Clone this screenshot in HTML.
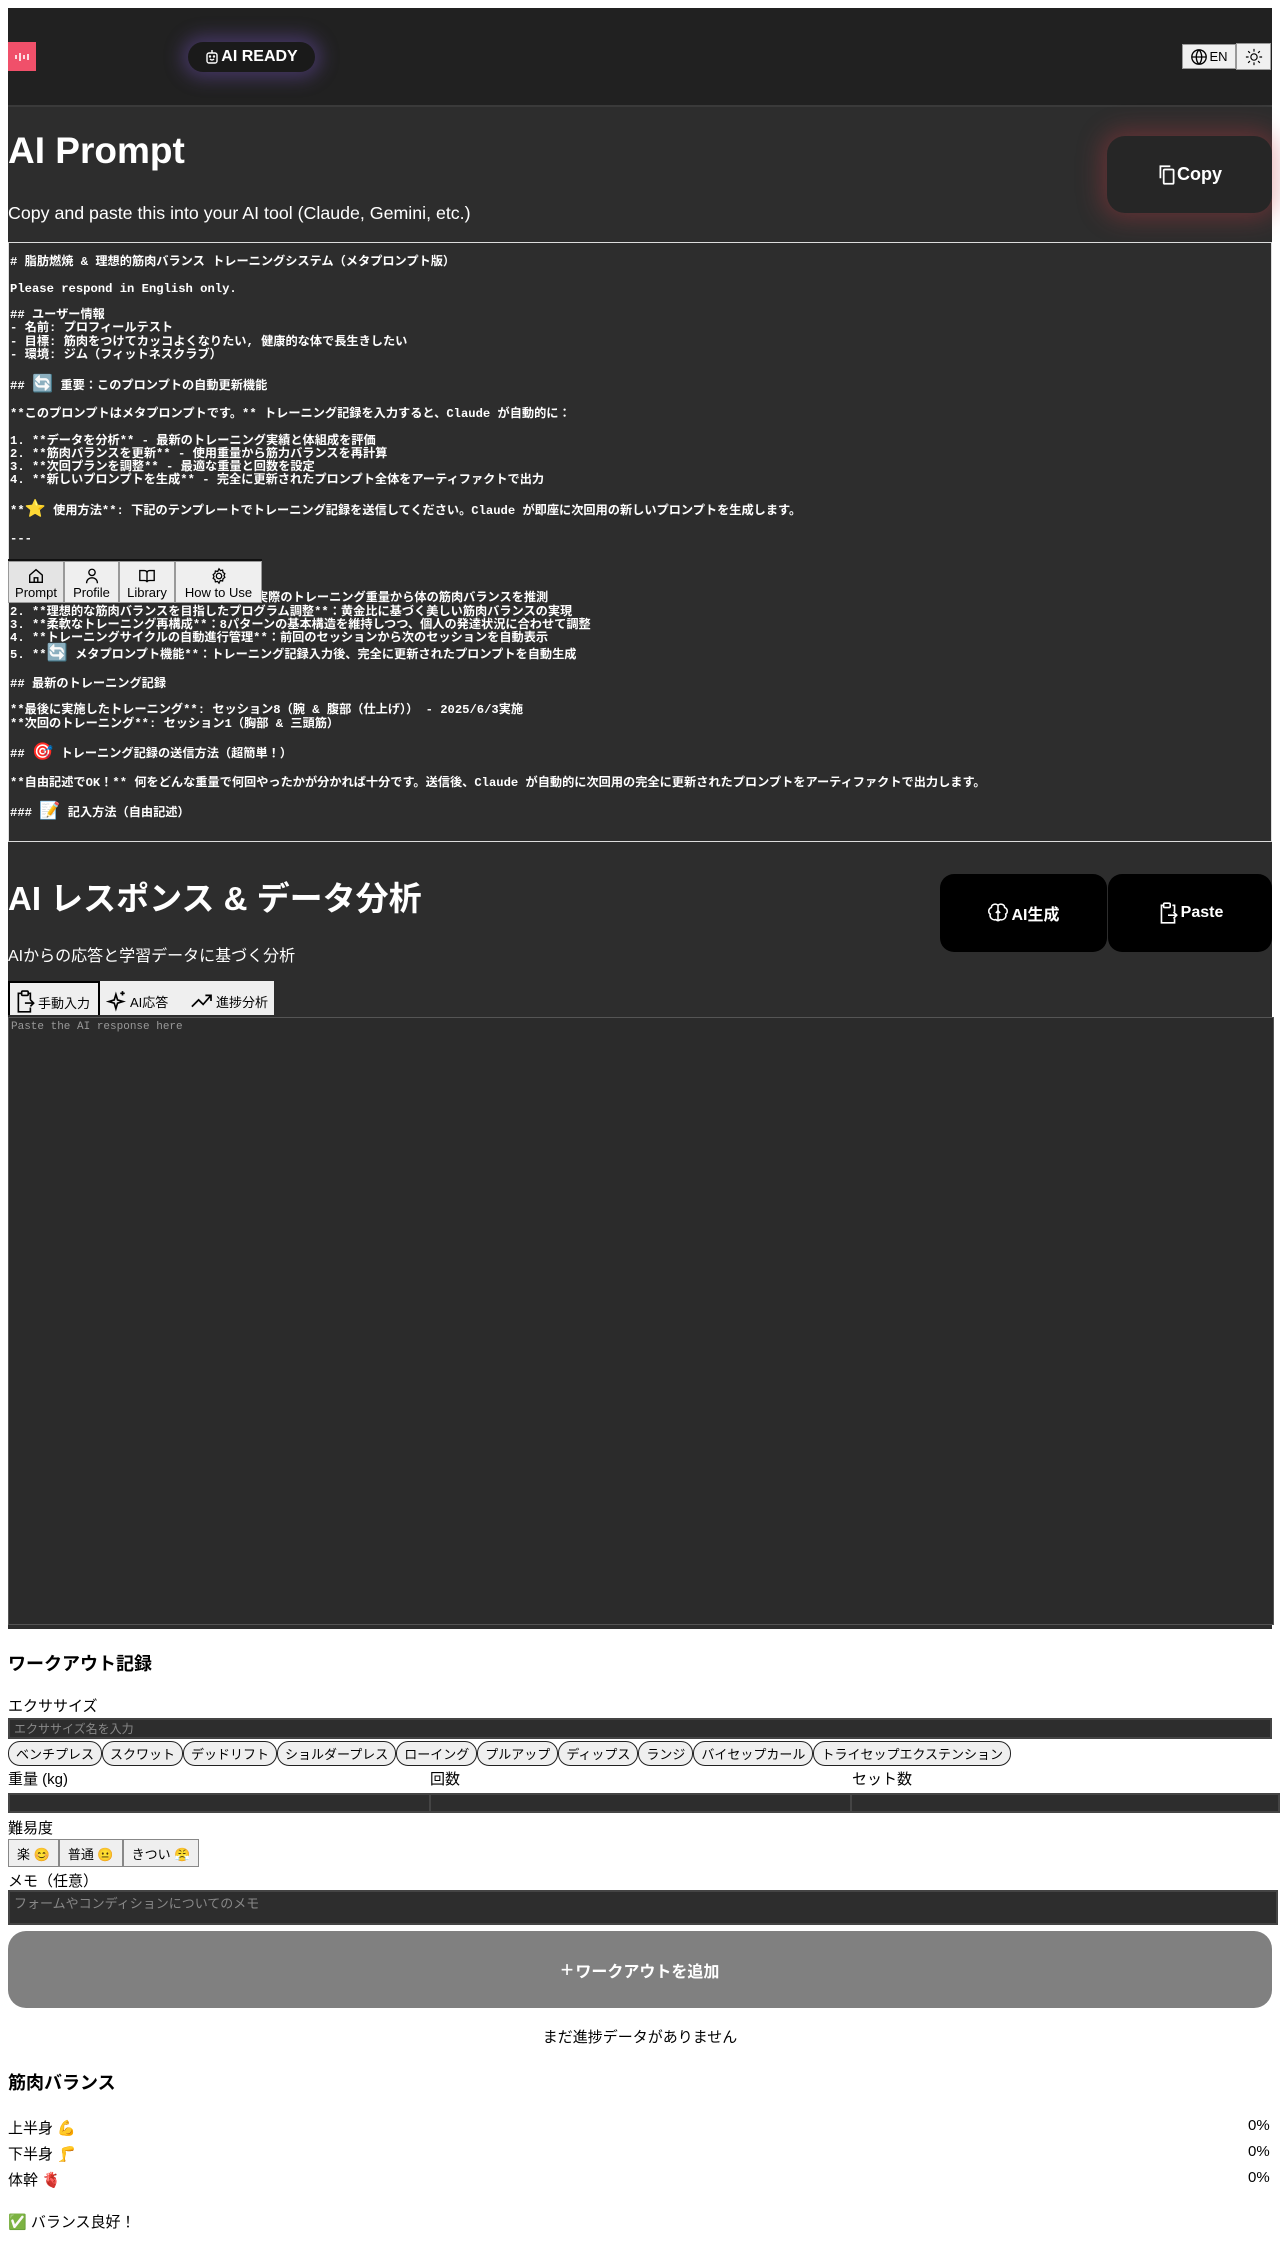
<!DOCTYPE html>
<html><head><meta charset="utf-8">
<style>
*{box-sizing:border-box}
body{margin:0;background:#fff;font-family:"Liberation Sans","Noto Sans CJK JP",sans-serif;width:1280px;height:2259px;position:relative;overflow:hidden;color:#000}
.hdr{position:absolute;left:8px;top:8px;width:1264px;height:99px;background:#212121;border-bottom:2px solid #3a3a3a}
.logo{position:absolute;left:0;top:34px;width:28px;height:29px;background:#f0506a;display:flex;align-items:center;justify-content:center}
.ready{position:absolute;left:180px;top:34px;width:127px;height:30px;border-radius:15px;background:#1a1a1a;color:#fff;font-weight:bold;font-size:16px;display:flex;align-items:center;justify-content:center;gap:2px;box-shadow:0 0 18px 6px rgba(110,80,180,.45)}
.en{position:absolute;left:1174px;top:36px;width:54px;height:25px;background:#f0f0f0;border:1px solid #999;display:flex;align-items:center;justify-content:center;font-size:13px;gap:1px}
.sun{position:absolute;left:1228px;top:35px;width:35px;height:27px;background:#f0f0f0;border:1px solid #999;display:flex;align-items:center;justify-content:center}
.sec1{position:absolute;left:8px;top:107px;width:1264px;height:738px;background:#2d2d2d}
h1{margin:0;position:absolute;left:0;font-size:37px;color:#fff;font-weight:bold}
.sub{position:absolute;left:0;color:#fff;font-size:17.8px}
.copy{position:absolute;left:1099px;top:29px;width:165px;height:77px;border-radius:18px;background:#262626;color:#fff;font-weight:bold;font-size:18px;display:flex;align-items:center;justify-content:center;box-shadow:0 0 24px 6px rgba(200,60,70,.35)}
.ta{position:absolute;left:0;top:135px;width:1264px;height:600px;border:1px solid #ddd;background:#2d2d2d;color:#fff;font-family:"Liberation Mono","Noto Sans CJK JP",monospace;font-size:12.2px;font-weight:bold;line-height:13.3px;padding:13px 1px 0;white-space:pre;overflow:hidden;margin:0}
.ta .e{font-size:17px;line-height:19px}
.nav{position:absolute;left:8px;top:559px;width:254px;height:44px;display:flex;border-top:2px solid #111;z-index:5}
.nav div{background:#efefef;border:1px solid #999;display:flex;flex-direction:column;align-items:center;justify-content:flex-end;font-size:13px;padding-bottom:2px;color:#000}
.sec2{position:absolute;left:8px;top:845px;width:1264px;height:784px;background:#2d2d2d}
.bb{position:absolute;top:29px;height:78px;border-radius:14px;background:#000;color:#fff;font-weight:bold;font-size:16px;display:flex;align-items:center;justify-content:center;gap:2px}
.tabs{position:absolute;left:0;top:136px;display:flex;height:34px}
.tabs div{background:#efefef;display:flex;align-items:center;font-size:13px;padding:6px 6px 0 6px;gap:2px}
.ta2{position:absolute;left:0;top:172px;width:1266px;height:608px;background:#2b2b2b;border:1px solid #555;color:#999;font-family:"Liberation Mono",monospace;font-size:11px;padding:3px 2px}
.lbl{position:absolute;left:8px;font-size:15px}
.h3{position:absolute;left:8px;font-size:18px;font-weight:bold}
.inp{position:absolute;background:#2d2d2d;border:2px solid #444;color:#888;font-size:13px;padding:1px 4px}
.chips{position:absolute;left:8px;top:1741px;display:flex}
.chips span{border:1.5px solid #222;border-radius:12px;background:#efefef;font-size:13px;padding:2px 7px;height:25px;display:flex;align-items:center}
.diff{position:absolute;left:8px;top:1839px;display:flex}
.diff span{border:1px solid #888;background:#efefef;font-size:13px;padding:0 8px;height:28px;display:flex;align-items:center}
.add{position:absolute;left:8px;top:1931px;width:1264px;height:77px;border-radius:18px;background:#808080;color:#fff;font-weight:bold;font-size:16px;display:flex;align-items:center;justify-content:center}
</style></head><body>
<div class="hdr">
 <div class="logo"><svg width="16" height="12" viewBox="0 0 16 12" stroke="#fff" stroke-width="1.6"><path d="M2 4v4M6 2v8M10 4v4M14 3v6"/></svg></div>
 <div class="ready"><svg width="14" height="16" viewBox="0 0 14 16" fill="none" stroke="#fff" stroke-width="1.4"><rect x="2" y="4" width="10" height="10" rx="2"/><path d="M7 4V1M5 10q2 2 4 0"/><circle cx="5" cy="7.5" r=".5"/><circle cx="9" cy="7.5" r=".5"/></svg>AI READY</div>
 <div class="en"><svg width="18" height="18" viewBox="0 0 20 20" fill="none" stroke="#000" stroke-width="1.5"><circle cx="10" cy="10" r="8"/><path d="M2 10h16M10 2c-4 4-4 12 0 16M10 2c4 4 4 12 0 16"/></svg>EN</div>
 <div class="sun"><svg width="18" height="18" viewBox="0 0 20 20" fill="none" stroke="#000" stroke-width="1.3"><circle cx="10" cy="10" r="3.5"/><path d="M10 1v3M10 16v3M1 10h3M16 10h3M3.5 3.5l2 2M14.5 14.5l2 2M3.5 16.5l2-2M14.5 5.5l2-2"/></svg></div>
</div>
<div class="sec1">
 <h1 style="top:23px">AI Prompt</h1>
 <div class="sub" style="top:96px">Copy and paste this into your AI tool (Claude, Gemini, etc.)</div>
 <div class="copy"><svg width="20" height="22" viewBox="0 0 18 20" fill="none" stroke="#fff" stroke-width="1.6"><path d="M3 13V2h9"/><rect x="6" y="5" width="9" height="13" rx="1"/></svg>Copy</div>
<pre class="ta"># 脂肪燃焼 &amp; 理想的筋肉バランス トレーニングシステム（メタプロンプト版）

Please respond in English only.

## ユーザー情報
- 名前: プロフィールテスト
- 目標: 筋肉をつけてカッコよくなりたい, 健康的な体で長生きしたい
- 環境: ジム（フィットネスクラブ）

## <span class="e">🔄</span> 重要：このプロンプトの自動更新機能

**このプロンプトはメタプロンプトです。** トレーニング記録を入力すると、Claude が自動的に：

1. **データを分析** - 最新のトレーニング実績と体組成を評価
2. **筋肉バランスを更新** - 使用重量から筋力バランスを再計算
3. **次回プランを調整** - 最適な重量と回数を設定
4. **新しいプロンプトを生成** - 完全に更新されたプロンプト全体をアーティファクトで出力

**<span class="e">⭐</span> 使用方法**: 下記のテンプレートでトレーニング記録を送信してください。Claude が即座に次回用の新しいプロンプトを生成します。

---


## <span class="e">🎯</span> このシステムの特徴:
1. **使用重量から筋肉バランスを分析**：実際のトレーニング重量から体の筋肉バランスを推測
2. **理想的な筋肉バランスを目指したプログラム調整**：黄金比に基づく美しい筋肉バランスの実現
3. **柔軟なトレーニング再構成**：8パターンの基本構造を維持しつつ、個人の発達状況に合わせて調整
4. **トレーニングサイクルの自動進行管理**：前回のセッションから次のセッションを自動表示
5. **<span class="e">🔄</span> メタプロンプト機能**：トレーニング記録入力後、完全に更新されたプロンプトを自動生成

## 最新のトレーニング記録

**最後に実施したトレーニング**: セッション8（腕 &amp; 腹部（仕上げ）） - 2025/6/3実施
**次回のトレーニング**: セッション1（胸部 &amp; 三頭筋）

## <span class="e">🎯</span> トレーニング記録の送信方法（超簡単！）

**自由記述でOK！** 何をどんな重量で何回やったかが分かれば十分です。送信後、Claude が自動的に次回用の完全に更新されたプロンプトをアーティファクトで出力します。

### <span class="e">📝</span> 記入方法（自由記述）</pre>
</div>
<div class="nav">
 <div style="width:56px;background:#e4e4e4"><svg width="18" height="18" viewBox="0 0 20 20" fill="none" stroke="#000" stroke-width="1.5"><path d="M3 9l7-6 7 6v8H3z"/><path d="M8 17v-5h4v5"/></svg>Prompt</div>
 <div style="width:55px"><svg width="18" height="18" viewBox="0 0 20 20" fill="none" stroke="#000" stroke-width="1.5"><circle cx="10" cy="6" r="3.5"/><path d="M4 18c0-4 3-6 6-6s6 2 6 6"/></svg>Profile</div>
 <div style="width:56px"><svg width="18" height="18" viewBox="0 0 20 20" fill="none" stroke="#000" stroke-width="1.5"><path d="M2 4h5c2 0 3 1 3 3v10c0-1-1-2-3-2H2zM18 4h-5c-2 0-3 1-3 3v10c0-1 1-2 3-2h5z"/></svg>Library</div>
 <div style="width:87px"><svg width="18" height="18" viewBox="0 0 20 20" fill="none" stroke="#000" stroke-width="1.4"><circle cx="10" cy="10" r="3"/><path d="M10 2l1.5 2 2.5-.5.5 2.5 2 1.5-1 2 1 2-2 1.5-.5 2.5-2.5-.5L10 18l-1.5-2-2.5.5-.5-2.5-2-1.5 1-2-1-2 2-1.5.5-2.5 2.5.5z"/></svg>How to Use</div>
</div>
<div class="sec2">
 <h1 style="top:27px;font-size:33px">AI レスポンス &amp; データ分析</h1>
 <div class="sub" style="top:97px;font-size:16px">AIからの応答と学習データに基づく分析</div>
 <div class="bb" style="left:932px;width:167px"><svg width="22" height="22" viewBox="0 0 20 20" fill="none" stroke="#fff" stroke-width="1.4"><path d="M10 3c-2-2-6-1-6 2-3 1-3 5-1 6-1 3 2 6 5 5 1 1 2 1 2 1V3zM10 3c2-2 6-1 6 2 3 1 3 5 1 6 1 3-2 6-5 5-1 1-2 1-2 1"/><path d="M10 8l-2 2M10 8l2 2"/></svg>AI生成</div>
 <div class="bb" style="left:1100px;width:164px"><svg width="22" height="24" viewBox="0 0 20 22" fill="none" stroke="#fff" stroke-width="1.5"><rect x="6" y="2" width="6" height="4" rx="1"/><path d="M6 4H4v16h12v-4M14 4h2v6M10 13h8M15 10l3 3-3 3"/></svg>Paste</div>
 <div class="tabs">
  <div style="border:2px solid #000;border-bottom:none;background:#efefef;width:92px"><svg width="20" height="24" viewBox="0 0 18 22" fill="none" stroke="#000" stroke-width="1.5"><rect x="5" y="1" width="6" height="4" rx="1"/><path d="M5 3H2v17h11v-4M11 3h2v6M8 12h8M13 9l3 3-3 3"/></svg>手動入力</div>
  <div style="width:84px"><svg width="22" height="22" viewBox="0 0 18 20" fill="none" stroke="#000" stroke-width="1.5"><path d="M8 4l1.5 5 5 1.5-5 1.5L8 17l-1.5-5-5-1.5 5-1.5z"/><path d="M14 1v4M12 3h4"/></svg>AI応答</div>
  <div style="width:90px"><svg width="24" height="18" viewBox="0 0 20 16" fill="none" stroke="#000" stroke-width="1.5"><path d="M1 13l6-6 4 4 7-8M13 3h5v5"/></svg>進捗分析</div>
 </div>
 <div class="ta2">Paste the AI response here</div>
</div>

<div class="h3" style="top:1650px">ワークアウト記録</div>
<div class="lbl" style="top:1695px">エクササイズ</div>
<div class="inp" style="left:8px;top:1718px;width:1264px;height:21px;font-size:12px;padding-top:0">エクササイズ名を入力</div>
<div class="chips"><span>ベンチプレス</span><span>スクワット</span><span>デッドリフト</span><span>ショルダープレス</span><span>ローイング</span><span>プルアップ</span><span>ディップス</span><span>ランジ</span><span>バイセップカール</span><span>トライセップエクステンション</span></div>
<div class="lbl" style="top:1768px">重量 (kg)</div>
<div class="lbl" style="top:1768px;left:430px">回数</div>
<div class="lbl" style="top:1768px;left:852px">セット数</div>
<div class="inp" style="left:8px;top:1793px;width:423px;height:20px"></div>
<div class="inp" style="left:429px;top:1793px;width:423px;height:20px"></div>
<div class="inp" style="left:850px;top:1793px;width:430px;height:20px"></div>
<div class="lbl" style="top:1817px">難易度</div>
<div class="diff"><span>楽 😊</span><span>普通 😐</span><span>きつい 😤</span></div>
<div class="lbl" style="top:1870px">メモ（任意）</div>
<div class="inp" style="left:8px;top:1890px;width:1270px;height:35px">フォームやコンディションについてのメモ</div>
<div class="add"><span style="font-weight:normal;font-size:22px;margin-right:2px">+</span>ワークアウトを追加</div>
<div style="position:absolute;left:0;width:1280px;top:2026px;text-align:center;font-size:15px">まだ進捗データがありません</div>
<div class="h3" style="top:2069px">筋肉バランス</div>
<div class="lbl" style="top:2117px">上半身 💪</div><div class="lbl" style="top:2117px;left:1248px">0%</div>
<div class="lbl" style="top:2143px">下半身 🦵</div><div class="lbl" style="top:2143px;left:1248px">0%</div>
<div class="lbl" style="top:2169px">体幹 🫀</div><div class="lbl" style="top:2169px;left:1248px">0%</div>
<div class="lbl" style="top:2211px">✅ バランス良好！</div>
</body></html>
